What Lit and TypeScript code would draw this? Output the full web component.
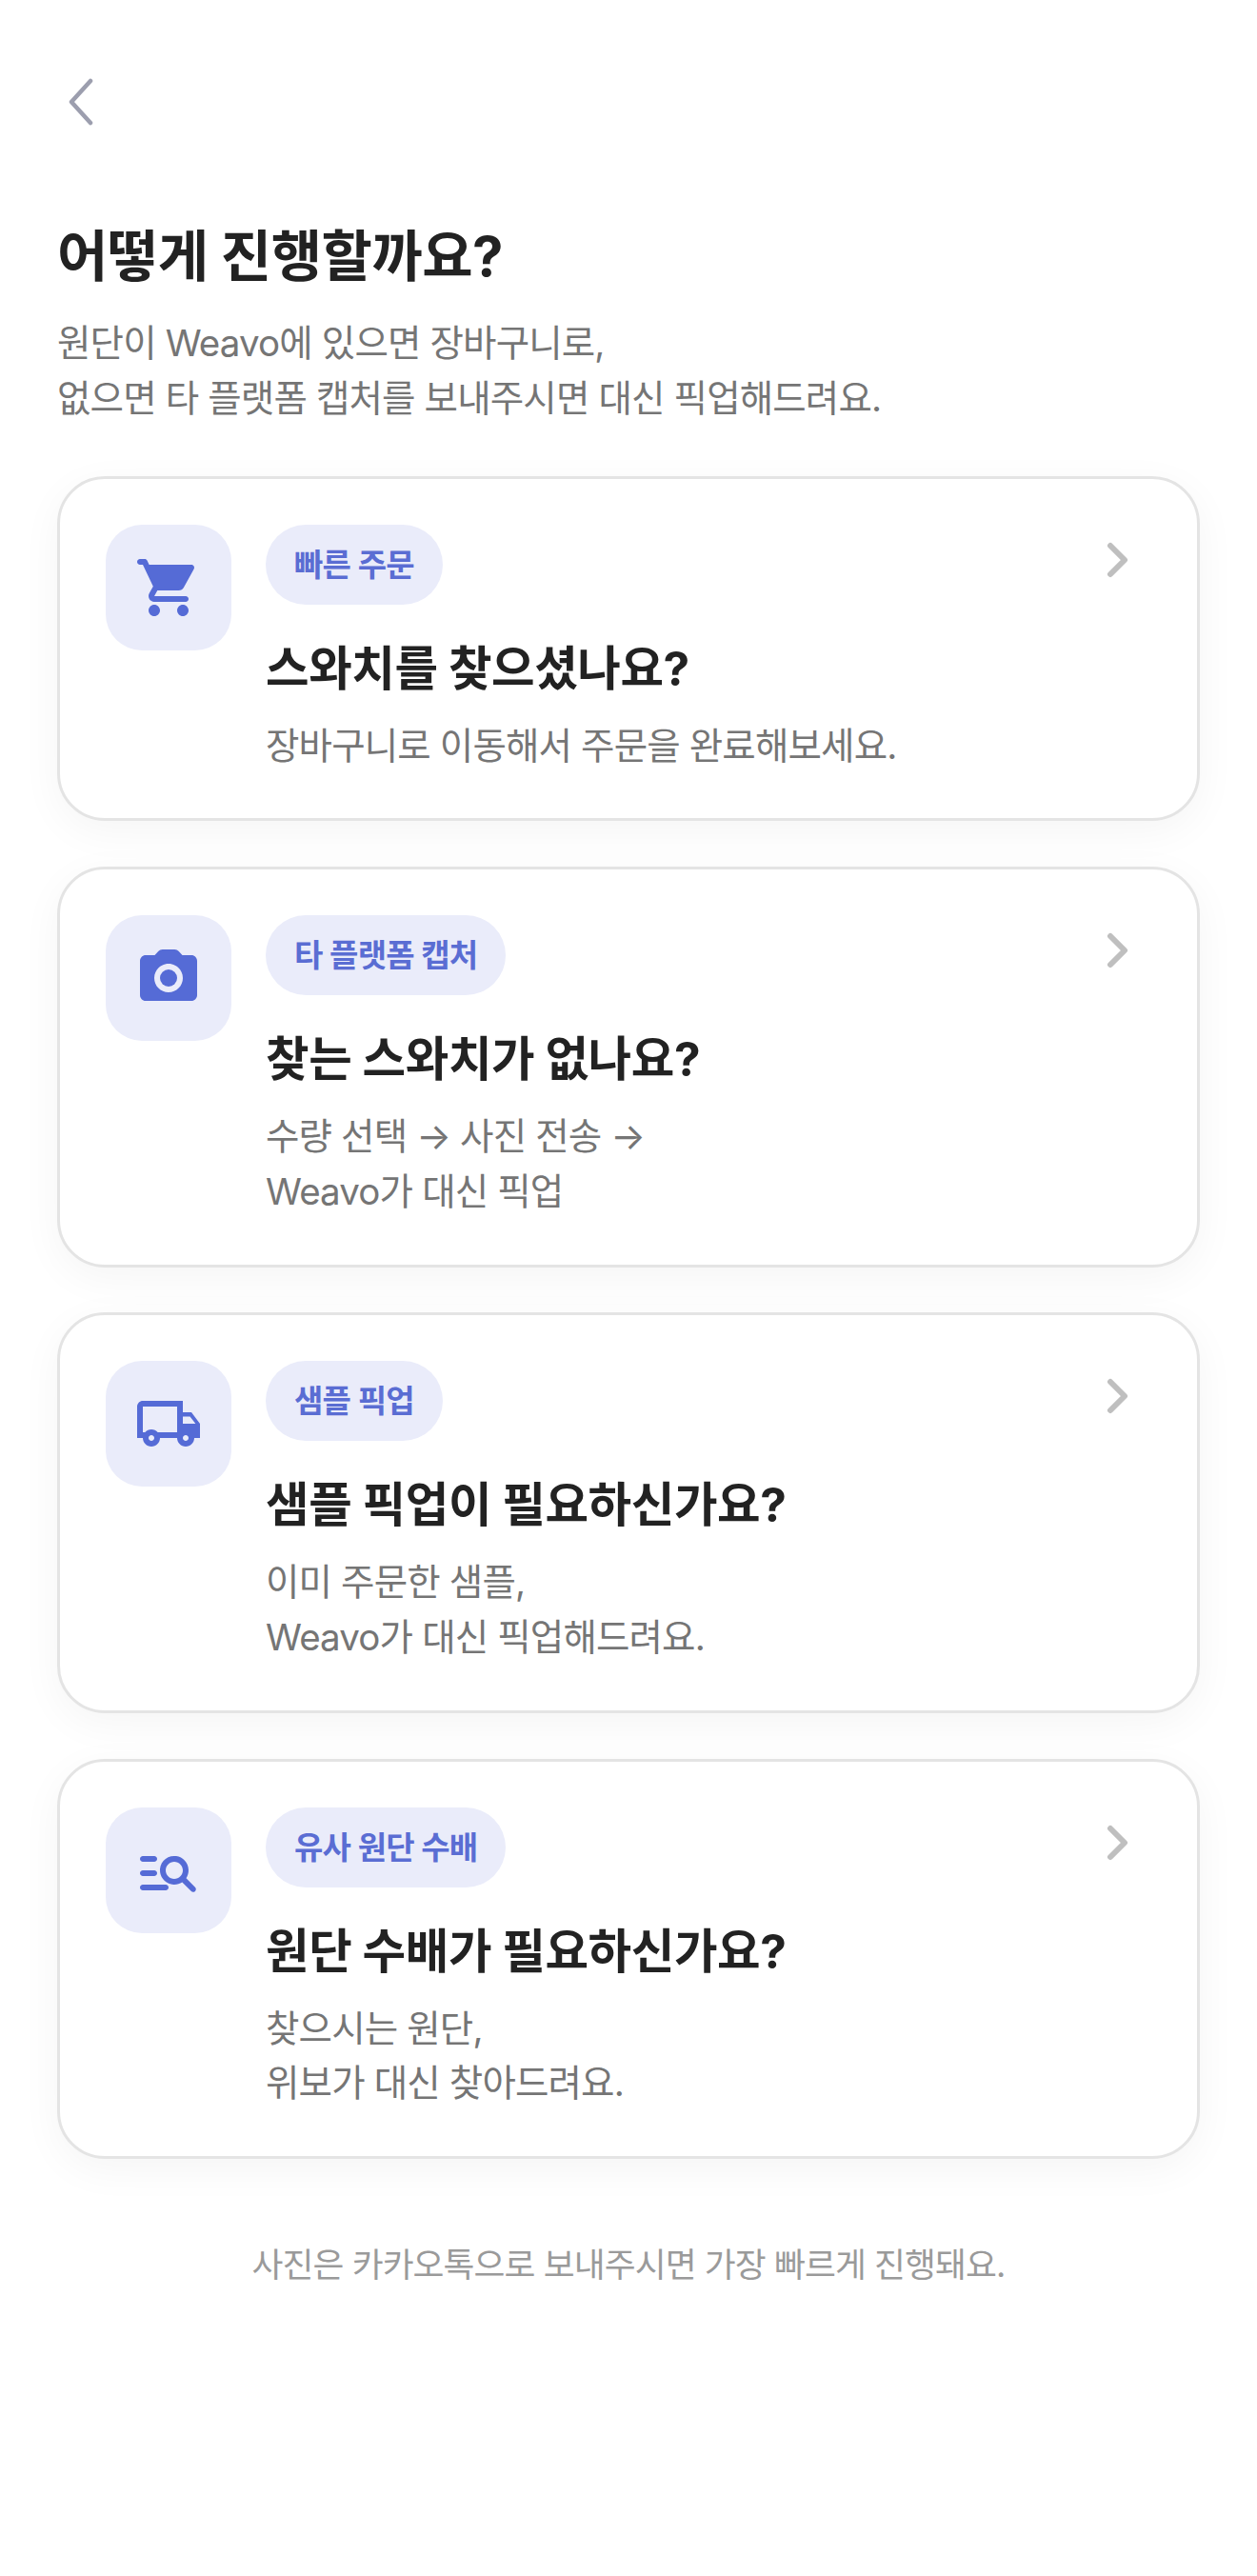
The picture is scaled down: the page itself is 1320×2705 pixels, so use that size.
import { LitElement, html, css, svg } from 'lit';
import { customElement } from 'lit/decorators.js';

const ICONS = {
  cart: svg`<path d="M7 18c-1.1 0-1.99.9-1.99 2S5.9 22 7 22s2-.9 2-2-.9-2-2-2zM1 3c0 .55.45 1 1 1h1l3.6 7.59-1.35 2.44C4.52 15.37 5.48 17 7 17h11c.55 0 1-.45 1-1s-.45-1-1-1H7l1.1-2h7.45c.75 0 1.41-.41 1.75-1.03l3.58-6.49c.37-.66-.11-1.48-.87-1.48H5.21l-.67-1.43c-.16-.35-.52-.57-.9-.57H2c-.55 0-1 .45-1 1zm16 15c-1.1 0-1.99.9-1.99 2s.89 2 1.99 2 2-.9 2-2-.9-2-2-2z"/>`,
  camera: svg`<circle cx="12" cy="12" r="3"/><path d="M20 4h-3.17l-1.24-1.35c-.37-.41-.91-.65-1.47-.65h-4.24c-.56 0-1.1.24-1.48.65L7.17 4H4c-1.1 0-2 .9-2 2v12c0 1.1.9 2 2 2h16c1.1 0 2-.9 2-2V6c0-1.1-.9-2-2-2zm-8 13c-2.76 0-5-2.24-5-5s2.24-5 5-5 5 2.24 5 5-2.24 5-5 5z"/>`,
  truck: svg`<path d="M20 8h-3V4H3c-1.1 0-2 .9-2 2v11h2c0 1.66 1.34 3 3 3s3-1.34 3-3h6c0 1.66 1.34 3 3 3s3-1.34 3-3h2v-5l-3-4zm-.5 1.5l1.96 2.5H17V9.5h2.5zM6 18c-.55 0-1-.45-1-1s.45-1 1-1 1 .45 1 1-.45 1-1 1zm2.22-3c-.55-.61-1.33-1-2.22-1s-1.67.39-2.22 1H3V6h12v9H8.22zM18 18c-.55 0-1-.45-1-1s.45-1 1-1 1 .45 1 1-.45 1-1 1z"/>`,
  search: svg`<path d="M7 9H3c-.55 0-1-.45-1-1s.45-1 1-1h4c.55 0 1 .45 1 1s-.45 1-1 1zm0 3H3c-.55 0-1 .45-1 1s.45 1 1 1h4c.55 0 1-.45 1-1s-.45-1-1-1zm12.88 7.29l-3.12-3.12c-.86.56-1.89.88-3 .82-2.37-.11-4.4-1.96-4.72-4.31C8.6 9.32 11.32 6.6 14.68 7.04c2.35.32 4.2 2.35 4.31 4.72.06 1.11-.26 2.14-.82 3l3.13 3.13c.39.39.39 1.02 0 1.41-.39.38-1.03.38-1.42-.01zM17 12c0-1.65-1.35-3-3-3s-3 1.35-3 3 1.35 3 3 3 3-1.35 3-3zM3 19h8c.55 0 1-.45 1-1s-.45-1-1-1H3c-.55 0-1 .45-1 1s.45 1 1 1z"/>`,
};

const OPTIONS = [
  { icon: 'cart', chip: '빠른 주문', title: '스와치를 찾으셨나요?', lines: ['장바구니로 이동해서 주문을 완료해보세요.'] },
  { icon: 'camera', chip: '타 플랫폼 캡처', title: '찾는 스와치가 없나요?', lines: ['수량 선택 → 사진 전송 →', 'Weavo가 대신 픽업'] },
  { icon: 'truck', chip: '샘플 픽업', title: '샘플 픽업이 필요하신가요?', lines: ['이미 주문한 샘플,', 'Weavo가 대신 픽업해드려요.'] },
  { icon: 'search', chip: '유사 원단 수배', title: '원단 수배가 필요하신가요?', lines: ['찾으시는 원단,', '위보가 대신 찾아드려요.'] },
] as const;

@customElement('app-root')
export class AppRoot extends LitElement {
  static styles = css`
    :host {
      display: block;
      min-height: 2705px;
      background: #fff;
      font-family: Inter, 'Noto Sans CJK KR', sans-serif;
      color: #222;
    }

    .page {
      padding: 0 60px;
    }

    .back {
      display: block;
      padding: 82px 0 0 12px;
      height: 50px;
    }

    .back svg {
      display: block;
    }

    h1 {
      margin: 97px 0 0;
      font-size: 58px;
      line-height: 80px;
      font-weight: 700;
      letter-spacing: -0.5px;
      color: #222;
    }

    .sub {
      margin: 23px 0 0;
      font-size: 38.5px;
      line-height: 57.75px;
      letter-spacing: -0.85px;
      color: #757575;
    }

    .cards {
      display: flex;
      flex-direction: column;
      gap: 47.75px;
      margin-top: 52px;
    }

    .card {
      display: flex;
      align-items: flex-start;
      gap: 36px;
      padding: 48px 48px 47px 48px;
      border: 3px solid #e4e4e4;
      border-radius: 50px;
      background: #fff;
      box-shadow: 0 11px 44px rgba(0, 0, 0, 0.045);
    }

    .icon {
      flex: none;
      display: flex;
      align-items: center;
      justify-content: center;
      width: 132px;
      height: 132px;
      border-radius: 38px;
      background: #eaecfa;
    }

    .icon svg {
      width: 72px;
      height: 72px;
      fill: #556bd6;
    }

    .body {
      flex: 1;
      min-width: 0;
    }

    .chip {
      display: inline-block;
      padding: 0 30px;
      height: 84px;
      line-height: 84px;
      border-radius: 42px;
      background: #eaecfa;
      color: #5a6dd3;
      font-size: 33px;
      font-weight: 600;
      letter-spacing: -0.8px;
      vertical-align: top;
    }

    .title {
      margin: 32px 0 0;
      font-size: 49.5px;
      line-height: 70px;
      font-weight: 700;
      letter-spacing: -0.4px;
      color: #222;
    }

    .desc {
      margin: 18px 0 0;
      font-size: 38.5px;
      line-height: 57.75px;
      letter-spacing: -0.85px;
      color: #757575;
    }

    .chev {
      flex: none;
      display: block;
      margin: 18px 23px 0 0;
    }

    .note {
      margin: 85px 0 0;
      text-align: center;
      font-size: 35.75px;
      line-height: 52px;
      letter-spacing: -0.9px;
      color: #9a9a9a;
    }
  `;

  render() {
    return html`
      <div class="page">
        <div class="back">
          <svg width="26" height="50" viewBox="0 0 26 50" fill="none" stroke="#9c9eae" stroke-width="4.5" stroke-linecap="round" stroke-linejoin="round">
            <polyline points="23,3 3,25 23,47"></polyline>
          </svg>
        </div>
        <h1>어떻게 진행할까요?</h1>
        <p class="sub">원단이 Weavo에 있으면 장바구니로,<br />없으면 타 플랫폼 캡처를 보내주시면 대신 픽업해드려요.</p>
        <div class="cards">
          ${OPTIONS.map(
            (o) => html`
              <div class="card">
                <div class="icon">
                  <svg viewBox="0 0 24 24">${ICONS[o.icon]}</svg>
                </div>
                <div class="body">
                  <span class="chip">${o.chip}</span>
                  <div class="title">${o.title}</div>
                  <div class="desc">${o.lines.map((l, i) => html`${i ? html`<br />` : null}${l}`)}</div>
                </div>
                <svg class="chev" width="24" height="38" viewBox="0 0 24 38" fill="none" stroke="#bfbfbf" stroke-width="6" stroke-linecap="round" stroke-linejoin="round">
                  <polyline points="4,4 19,19 4,34"></polyline>
                </svg>
              </div>
            `,
          )}
        </div>
        <p class="note">사진은 카카오톡으로 보내주시면 가장 빠르게 진행돼요.</p>
      </div>
    `;
  }
}
